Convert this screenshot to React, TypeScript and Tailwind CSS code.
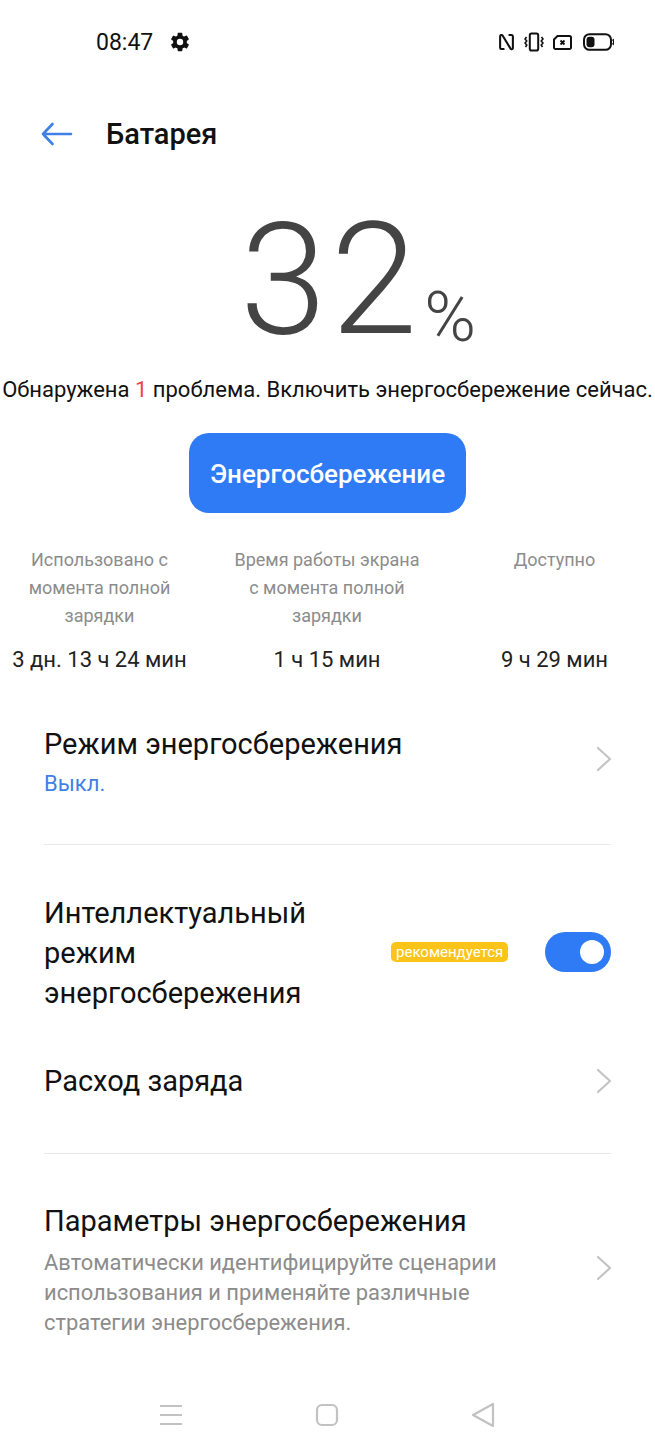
function StatusIcons() {
  return (
    <div className="flex items-center gap-[9px]">
      {/* NFC */}
      <svg width="15" height="18" viewBox="0 0 16 18" fill="none" stroke="#111" strokeWidth="2.2" strokeLinejoin="round" strokeLinecap="round" className="mr-[1px]">
        <path d="M5 16.5 H2.5 A1.5 1.5 0 0 1 1.2 15 V3 A1.5 1.5 0 0 1 3.8 2 L12 15.5 A1.2 1.2 0 0 0 14.8 15 V3 A1.5 1.5 0 0 0 13.5 1.5 H11" />
      </svg>
      {/* vibrate */}
      <svg width="20" height="20" viewBox="0 0 20 20" fill="none" stroke="#111" strokeWidth="2" strokeLinejoin="round">
        <rect x="5.8" y="1.5" width="8.4" height="17" rx="1.8" />
        <path d="M2.5 5 L1 7 L2.8 9 L1 11 L2.8 13 L1.5 15" strokeWidth="1.6" />
        <path d="M17.5 5 L19 7 L17.2 9 L19 11 L17.2 13 L18.5 15" strokeWidth="1.6" />
      </svg>
      {/* sim card without service */}
      <svg width="19" height="15" viewBox="0 0 19 15" fill="none" stroke="#111" strokeWidth="2" strokeLinejoin="round">
        <path d="M1 4.5 L4.5 1 H16.5 A1.5 1.5 0 0 1 18 2.5 V12.5 A1.5 1.5 0 0 1 16.5 14 H2.5 A1.5 1.5 0 0 1 1 12.5 Z" />
        <path d="M7.5 5.5 L11.5 9.5 M11.5 5.5 L7.5 9.5" strokeWidth="1.8" />
      </svg>
      {/* battery */}
      <svg width="31" height="18" viewBox="0 0 31 18" fill="none" className="ml-[2px]">
        <rect x="1" y="1.2" width="27" height="15.6" rx="5.5" stroke="#111" strokeWidth="2" />
        <rect x="3.5" y="3.7" width="8" height="10.6" rx="3" fill="#111" />
        <path d="M29.6 6.5 A3 3 0 0 1 29.6 11.5" stroke="#111" strokeWidth="1.8" />
      </svg>
    </div>
  );
}

function Chevron({ className = "" }: { className?: string }) {
  return (
    <svg width="16" height="26" viewBox="0 0 16 26" fill="none" stroke="#c4c4c4" strokeWidth="2.2" strokeLinecap="round" strokeLinejoin="round" className={`shrink-0 -mr-[1px] ${className}`}>
      <path d="M2 2 L14 13 L2 24" />
    </svg>
  );
}

const stats = [
  { label: ["Использовано с", "момента полной", "зарядки"], value: "3 дн. 13 ч 24 мин", cls: "w-[200px]" },
  { label: ["Время работы экрана", "с момента полной", "зарядки"], value: "1 ч 15 мин", cls: "w-[255px]" },
  { label: ["Доступно", "\u00a0", "\u00a0"], value: "9 ч 29 мин", cls: "w-[200px]" },
];

export default function App() {
  return (
    <main
      className="w-[655px] h-[1456px] bg-white overflow-hidden flex flex-col text-[#111]"
      style={{ fontFamily: "Roboto, sans-serif" }}
    >
      {/* status bar */}
      <div className="h-[84px] pl-[96px] pr-[41px] flex items-center justify-between">
        <div className="flex items-center gap-[16px]">
          <span className="text-[23px] leading-none">08:47</span>
          <svg width="22" height="22" viewBox="0 0 24 24" fill="#111">
            <path d="M19.4 13c.05-.33.1-.66.1-1s-.05-.67-.1-1l2.1-1.65c.2-.15.25-.42.12-.64l-2-3.46c-.12-.22-.39-.3-.61-.22l-2.49 1c-.52-.4-1.08-.73-1.69-.98l-.38-2.65A.49.49 0 0 0 14 2h-4c-.25 0-.46.18-.49.42l-.38 2.65c-.61.25-1.17.59-1.69.98l-2.49-1a.5.5 0 0 0-.61.22l-2 3.46c-.13.22-.07.49.12.64L4.57 11c-.04.33-.07.66-.07 1s.03.67.07 1l-2.11 1.65c-.19.15-.25.42-.12.64l2 3.46c.12.22.39.3.61.22l2.49-1c.52.4 1.08.73 1.69.98l.38 2.65c.03.24.24.42.49.42h4c.25 0 .46-.18.49-.42l.38-2.65c.61-.25 1.17-.59 1.69-.98l2.49 1c.23.09.49 0 .61-.22l2-3.46c.12-.22.07-.49-.12-.64zM12 15.5a3.5 3.5 0 1 1 0-7 3.5 3.5 0 0 1 0 7z" />
          </svg>
        </div>
        <StatusIcons />
      </div>

      {/* header */}
      <div className="h-[100px] pl-[41px] flex items-center gap-[33px]">
        <svg width="32" height="24" viewBox="0 0 32 24" fill="none" stroke="#3f7fe6" strokeWidth="2.6" strokeLinecap="round" strokeLinejoin="round">
          <path d="M30 12 H2 M11.5 2 L2 12 L11.5 22" />
        </svg>
        <h1 className="text-[29px] font-medium leading-none">Батарея</h1>
      </div>

      {/* charge level */}
      <div className="h-[176px] pl-[61px] flex items-end justify-center text-[#444] pb-[2px]">
        <span className="relative top-[10px] text-[156px] font-[350] leading-[176px] tracking-[4px]">32</span>
        <span className="relative top-[2px] text-[70px] font-light leading-[86px] ml-[3px]">%</span>
      </div>

      <p className="mt-[16px] text-[22px] leading-[28px] text-center whitespace-nowrap">
        Обнаружена <span className="text-[#e5484d]">1</span> проблема. Включить энергосбережение сейчас.
      </p>

      <button className="mt-[29px] self-center w-[277px] h-[80px] pt-[2px] rounded-[20px] bg-[#2f7af5] text-white text-[26px] font-medium">
        Энергосбережение
      </button>

      {/* usage stats */}
      <div className="mt-[33px] flex justify-center -ml-[1px]">
        {stats.map((s) => (
          <div key={s.value} className={`${s.cls} flex flex-col items-center text-center`}>
            <div className="text-[18px] leading-[28px] text-[#8c8c8c]">
              {s.label.map((l, i) => (
                <div key={i}>{l}</div>
              ))}
            </div>
            <div className="mt-[16px] text-[22px] leading-[28px] text-[#222] whitespace-nowrap">{s.value}</div>
          </div>
        ))}
      </div>

      {/* settings list */}
      <div className="mt-[52px] mx-[44px] flex flex-col">
        <div className="flex items-center justify-between pb-[45px] border-b border-[#e8e8e8]">
          <div>
            <div className="text-[29px] leading-[36px]">Режим энергосбережения</div>
            <div className="mt-[7px] text-[22px] leading-[30px] text-[#3f7fe6]">Выкл.</div>
          </div>
          <Chevron className="-mt-[7px]" />
        </div>

        <div className="mt-[48px] flex items-center">
          <div className="w-[320px] text-[29px] leading-[40px]">
            Интеллектуальный режим энергосбережения
          </div>
          <span className="ml-[27px] mb-[2px] h-[20px] px-[5px] rounded-[5px] bg-[#fcc419] text-white text-[15px] leading-[20px] whitespace-nowrap">
            рекомендуется
          </span>
          <div className="ml-auto mb-[3px] w-[66px] h-[40px] rounded-full bg-[#2f7af5] flex items-center justify-end pr-[7px]">
            <div className="w-[24px] h-[24px] rounded-full bg-white" />
          </div>
        </div>

        <div className="mt-[50px] pb-[54px] border-b border-[#e8e8e8] flex items-center justify-between">
          <div className="text-[29px] leading-[36px]">Расход заряда</div>
          <Chevron />
        </div>

        <div className="mt-[49px] flex items-center justify-between">
          <div>
            <div className="text-[29px] leading-[36px]">Параметры энергосбережения</div>
            <div className="mt-[9px] w-[500px] text-[21.9px] leading-[30px] text-[#8c8c8c]">
              Автоматически идентифицируйте сценарии использования и применяйте различные стратегии энергосбережения.
            </div>
          </div>
          <Chevron className="-mt-[6px]" />
        </div>
      </div>

      {/* navigation bar */}
      <div className="mt-auto h-[80px] pl-[159px] pr-[160px] flex items-center justify-between pb-[2px]">
        <svg width="24" height="22" viewBox="0 0 24 22" stroke="#c2c2c2" strokeWidth="1.8">
          <path d="M1 2 H23 M1 11 H23 M1 20 H23" />
        </svg>
        <svg width="24" height="24" viewBox="0 0 24 24" fill="none" stroke="#c2c2c2" strokeWidth="2.2">
          <rect x="2" y="2" width="20" height="20" rx="5" />
        </svg>
        <svg width="24" height="26" viewBox="0 0 24 26" fill="none" stroke="#c2c2c2" strokeWidth="2.2" strokeLinejoin="round">
          <path d="M22 2 V24 L2 13 Z" />
        </svg>
      </div>
    </main>
  );
}
